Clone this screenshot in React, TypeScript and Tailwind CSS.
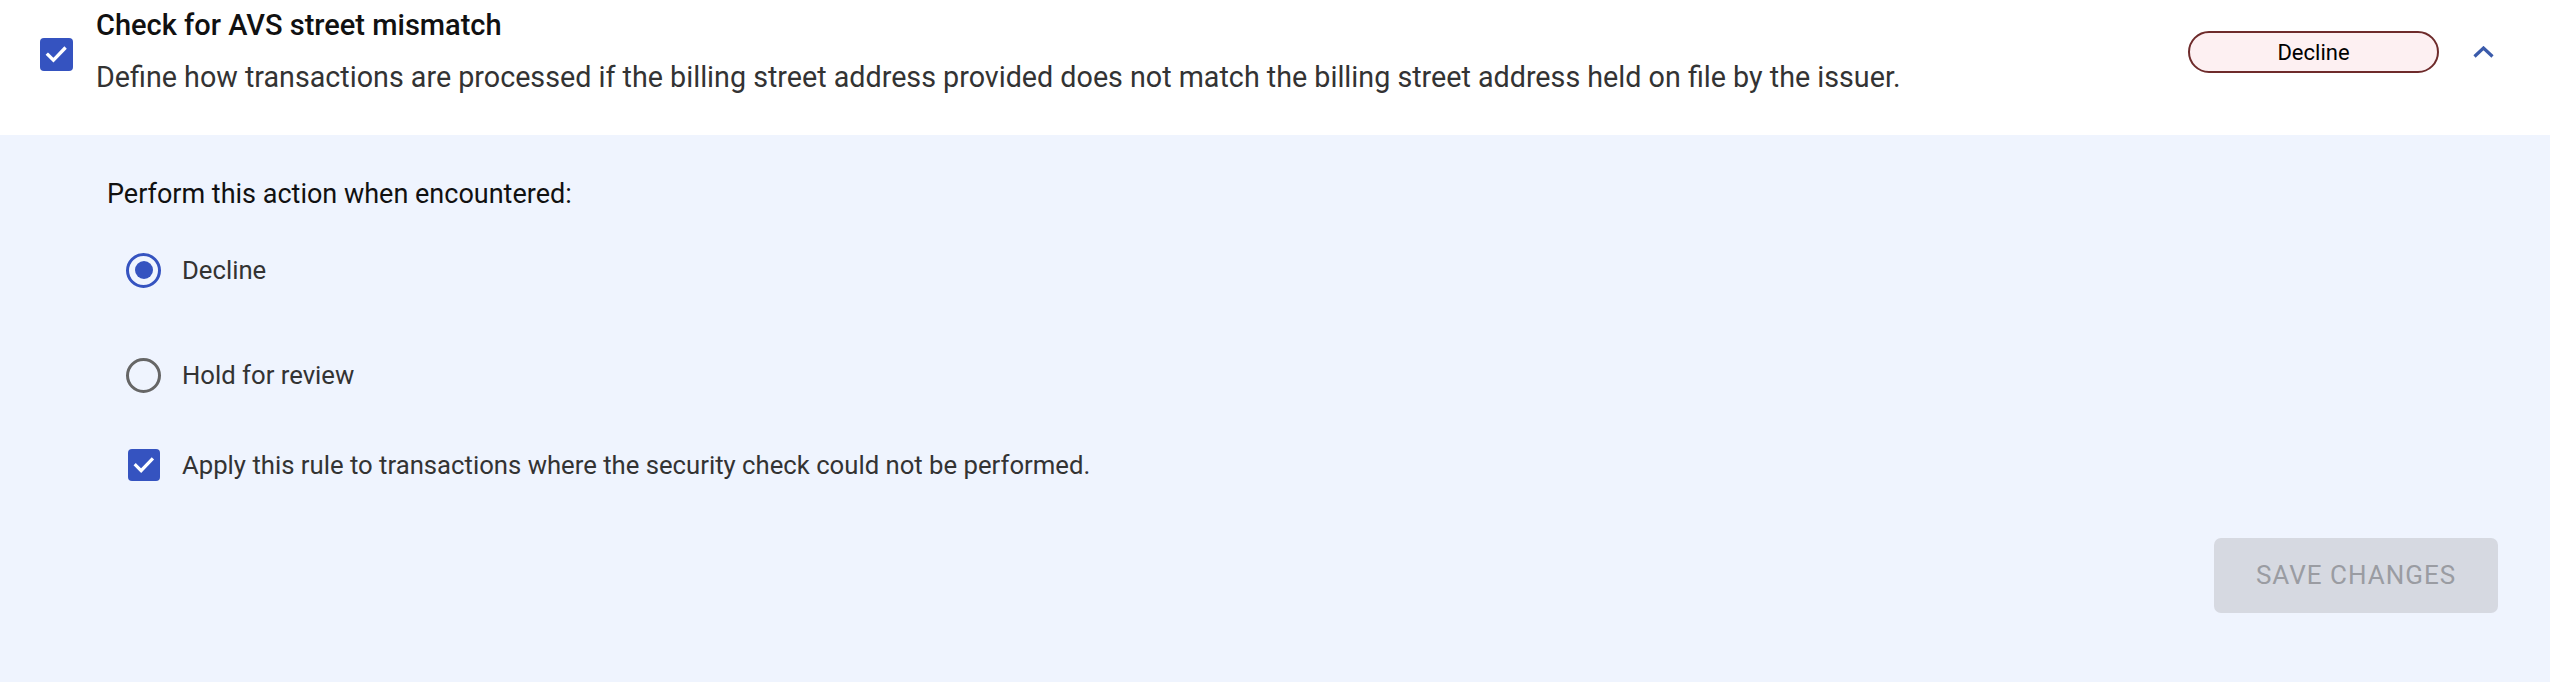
import { useState } from 'react'

const CheckBox = ({ checked, size }: { checked: boolean; size: string }) => {
  return (
    <span
      className={`flex shrink-0 items-center justify-center rounded-[4px] ${size} ${
        checked ? 'bg-[#3553c0]' : 'border-[3px] border-[#666]'
      }`}
    >
      {checked && (
        <svg viewBox="0 0 24 24" className="w-[80%] h-[80%]" fill="none">
          <path d="M4.5 12.5l5 5L19.5 7" stroke="white" strokeWidth="3" strokeLinecap="square" />
        </svg>
      )}
    </span>
  )
}

const Radio = ({ checked }: { checked: boolean }) => {
  return (
    <span
      className={`flex shrink-0 items-center justify-center w-[35px] h-[35px] rounded-full border-[3px] ${
        checked ? 'border-[#3553c0]' : 'border-[#666]'
      }`}
    >
      {checked && <span className="w-[18px] h-[18px] rounded-full bg-[#3553c0]" />}
    </span>
  )
}

function App() {
  const [action, setAction] = useState<'decline' | 'hold'>('decline')
  const [applyRule, setApplyRule] = useState(true)

  return (
    <div className="w-[2550px] h-[682px] flex flex-col font-['Roboto',sans-serif]">
      {/* header */}
      <div className="h-[135px] bg-white flex items-start pl-[40px] pr-[56px]">
        <div className="mt-[38px]">
          <CheckBox checked size="w-[33px] h-[33px]" />
        </div>
        <div className="ml-[23px] pt-[7px] flex-1">
          <h2 className="text-[29px] leading-[36px] font-medium text-[#111]">
            Check for AVS street mismatch
          </h2>
          <p className="mt-[15px] text-[28.7px] leading-[38px] text-[#333]">
            Define how transactions are processed if the billing street address provided does not match the billing street address held on file by the issuer.
          </p>
        </div>
        <div className="flex items-center h-[42px] mt-[31px]">
          <span className="flex items-center justify-center w-[251px] h-[42px] rounded-full border-2 border-[#6e2b2b] bg-[#fdf0f2] text-[22px] text-black">
            Decline
          </span>
          <svg viewBox="0 0 21 12" className="ml-[34px] w-[21px] h-[12px]" fill="none">
            <path d="M1.5 10.5L10.5 2l9 8.5" stroke="#3b5bab" strokeWidth="3.2" />
          </svg>
        </div>
      </div>

      {/* body */}
      <div className="flex-1 bg-[#eff4fe] pl-[107px] pr-[52px] pt-[42px] flex flex-col">
        <p className="text-[27px] leading-[34px] text-[#111]">Perform this action when encountered:</p>
        <div className="mt-[24px] ml-[19px] flex flex-col">
          <label className="h-[70px] flex items-center gap-[21px] cursor-pointer" onClick={() => setAction('decline')}>
            <Radio checked={action === 'decline'} />
            <span className="text-[25.7px] text-[#333]">Decline</span>
          </label>
          <label className="mt-[35px] h-[70px] flex items-center gap-[21px] cursor-pointer" onClick={() => setAction('hold')}>
            <Radio checked={action === 'hold'} />
            <span className="text-[25.7px] text-[#333]">Hold for review</span>
          </label>
          <label
            className="mt-[20px] h-[70px] flex items-center gap-[22px] pl-[2px] cursor-pointer"
            onClick={() => setApplyRule(!applyRule)}
          >
            <CheckBox checked={applyRule} size="w-[32px] h-[32px]" />
            <span className="text-[25.7px] text-[#333]">
              Apply this rule to transactions where the security check could not be performed.
            </span>
          </label>
        </div>
        <div className="mt-[38px] flex justify-end">
          <button
            disabled
            className="w-[284px] h-[75px] rounded-[7px] bg-[#d6d9e1] text-[26px] tracking-[1px] text-[#9a9ca2]"
          >
            SAVE CHANGES
          </button>
        </div>
      </div>
    </div>
  )
}

export default App
